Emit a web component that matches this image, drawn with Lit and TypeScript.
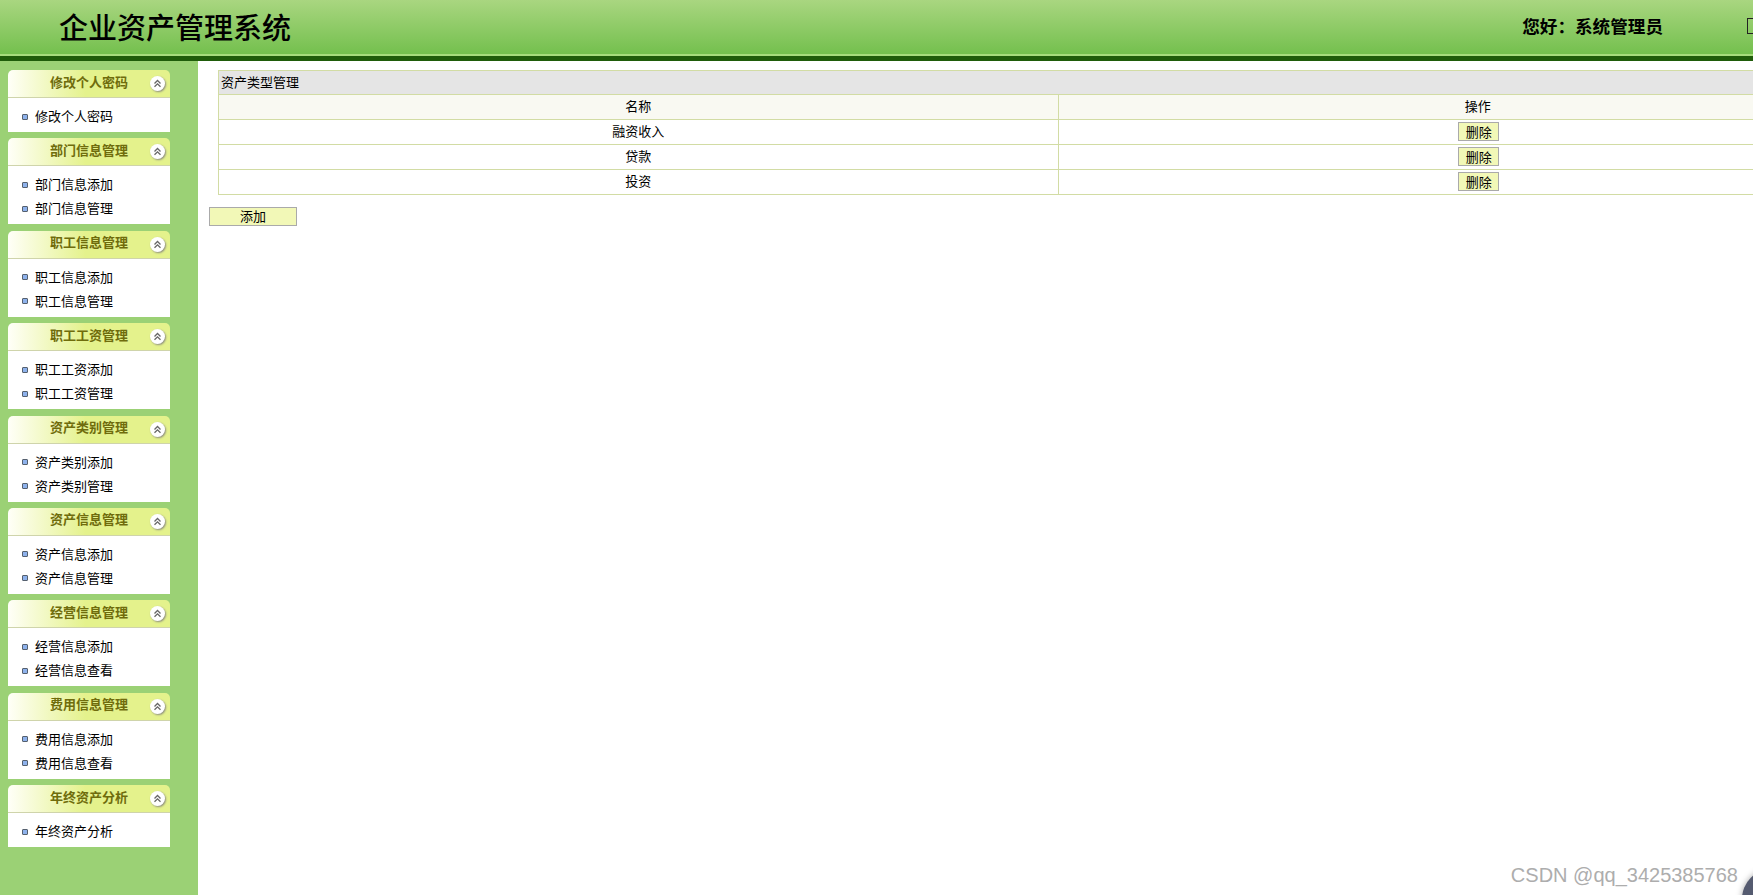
import { LitElement, html, css, svg } from "lit";
import { customElement } from "lit/decorators.js";

const MENU: [string, string[]][] = [
  ["修改个人密码", ["修改个人密码"]],
  ["部门信息管理", ["部门信息添加", "部门信息管理"]],
  ["职工信息管理", ["职工信息添加", "职工信息管理"]],
  ["职工工资管理", ["职工工资添加", "职工工资管理"]],
  ["资产类别管理", ["资产类别添加", "资产类别管理"]],
  ["资产信息管理", ["资产信息添加", "资产信息管理"]],
  ["经营信息管理", ["经营信息添加", "经营信息查看"]],
  ["费用信息管理", ["费用信息添加", "费用信息查看"]],
  ["年终资产分析", ["年终资产分析"]],
];
const ROWS = ["融资收入", "贷款", "投资"];

const chevrons = svg`<svg class="chev" viewBox="0 0 9 9" width="9" height="9"><path d="M1.5 4.5 4.5 1.5 7.5 4.5M1.5 7.8 4.5 4.8 7.5 7.8" fill="none" stroke="#666" stroke-width="1.3"/></svg>`;

@customElement("app-root")
export class AppRoot extends LitElement {
  static styles = css`
    :host {
      display: block;
      width: 1753px;
      height: 895px;
      overflow: hidden;
      position: relative;
      background: #fff;
      color: #000;
      font-family: "Noto Sans CJK SC", "Liberation Sans", sans-serif;
      font-size: 13px;
    }
    .top {
      box-sizing: border-box;
      height: 61px;
      display: flex;
      align-items: center;
      padding: 0 0 5px 59px;
      background: linear-gradient(#a9d680, #72bf4c);
      border-bottom: 5px solid #1f5c0a;
      box-shadow: inset 0 -2px 0 #a6dc7c;
    }
    .brand {
      flex: 1;
      font-size: 29px;
      line-height: 40px;
      font-weight: 500;
      font-family: "Noto Sans CJK SC", serif;
    }
    .hello {
      font-size: 17.6px;
      font-weight: 700;
      margin-right: 84px;
      white-space: nowrap;
    }
    .missing {
      flex: none;
      box-sizing: border-box;
      width: 14px;
      height: 16px;
      border: 1px solid #222;
      margin-right: -8px;
    }
    .body {
      display: flex;
      height: 834px;
    }
    .side {
      flex: none;
      box-sizing: border-box;
      width: 198px;
      padding: 9px 28px 0 8px;
      background: #9bd175;
      display: flex;
      flex-direction: column;
      gap: 6.4px;
    }
    .sec-head {
      box-sizing: border-box;
      height: 28px;
      display: flex;
      align-items: center;
      padding: 0 5px 4px 42px;
      border-radius: 5px 5px 0 0;
      border-bottom: 1px solid #cfd4ab;
      background: linear-gradient(90deg, #fffff8 0%, #e4f28c 48%, #e4f28c 100%);
      color: #6f6c0c;
      font-weight: 700;
      line-height: 18px;
    }
    .sec-title { flex: 1; }
    .toggle {
      flex: none;
      width: 15px;
      height: 15px;
      margin-top: 4px;
      border-radius: 50%;
      background: #fff;
      box-shadow: 1px 1px 2px #8d8d80;
      display: flex;
      align-items: center;
      justify-content: center;
    }
    .chev { display: block; }
    .sec-body {
      background: #fff;
      padding: 6.5px 0 3.5px 14px;
    }
    .item {
      box-sizing: border-box;
      height: 24px;
      display: flex;
      align-items: center;
      gap: 7px;
      padding-bottom: 1px;
      line-height: 18px;
    }
    .dot {
      flex: none;
      box-sizing: border-box;
      width: 6px;
      height: 6px;
      margin-top: 1px;
      background: #8eb2ec;
      border: 1px solid #55606e;
      border-radius: 1px;
    }
    .main {
      flex: 1;
      min-width: 0;
      padding: 9px 0 0 11px;
    }
    table {
      border-collapse: collapse;
      table-layout: fixed;
      width: 1680px;
      margin-left: 9px;
    }
    td {
      box-sizing: border-box;
      border: 1px solid #d2dca4;
      height: 25px;
      padding: 0 0 2px;
      text-align: center;
      line-height: 18px;
    }
    td.cap {
      height: 24px;
      background: #e5e5e5;
      text-align: left;
      padding-left: 2px;
    }
    tr.head td { background: #f9f9f2; }
    button {
      box-sizing: border-box;
      display: block;
      height: 19px;
      padding: 0;
      background: #f2f8b7;
      border: 1px solid #aaa;
      font: inherit;
      line-height: 15px;
      color: #000;
    }
    .del {
      width: 41px;
      margin: 0 auto;
      transform: translateX(1px);
    }
    .add {
      width: 88px;
      margin-top: 12px;
      padding-bottom: 2px;
    }
    .mark {
      position: absolute;
      right: 15px;
      bottom: 8px;
      font-family: "Liberation Sans", sans-serif;
      font-size: 20px;
      line-height: 24px;
      color: #adadad;
      white-space: nowrap;
    }
    .corner {
      position: absolute;
      left: 1742px;
      top: 869px;
      width: 60px;
      height: 60px;
      border-radius: 50%;
      background: #555b70;
      box-shadow: 0 0 6px rgba(0, 0, 0, 0.35);
    }
  `;

  render() {
    return html`
      <div class="top">
        <div class="brand">企业资产管理系统</div>
        <div class="hello">您好：系统管理员</div>
        <div class="missing"></div>
      </div>
      <div class="body">
        <div class="side">
          ${MENU.map(
            ([title, items]) => html`
              <section>
                <div class="sec-head">
                  <span class="sec-title">${title}</span>
                  <span class="toggle">${chevrons}</span>
                </div>
                <div class="sec-body">
                  ${items.map(
                    (i) => html`<div class="item"><span class="dot"></span><span>${i}</span></div>`
                  )}
                </div>
              </section>
            `
          )}
        </div>
        <div class="main">
          <table>
            <tr><td class="cap" colspan="2">资产类型管理</td></tr>
            <tr class="head"><td>名称</td><td>操作</td></tr>
            ${ROWS.map(
              (r) => html`<tr><td>${r}</td><td><button class="del">删除</button></td></tr>`
            )}
          </table>
          <button class="add">添加</button>
        </div>
      </div>
      <div class="mark">CSDN @qq_3425385768</div>
      <div class="corner"></div>
    `;
  }
}
